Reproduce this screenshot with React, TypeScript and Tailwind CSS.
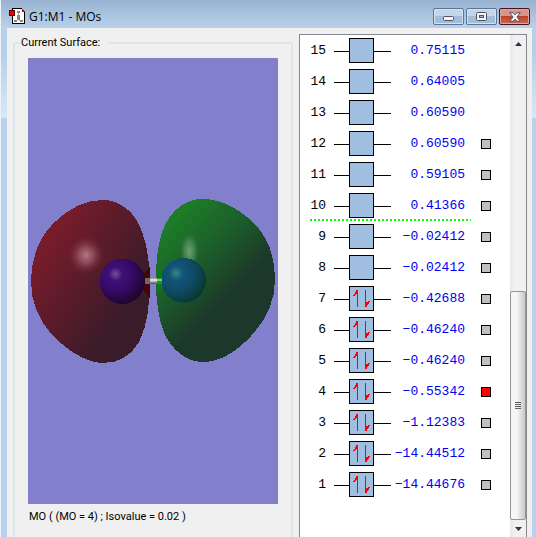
import { useState } from 'react';

type Orbital = {
    id: number;
    energy: string;
    occupied?: boolean;
    selectable?: boolean;
};

const orbitals: Orbital[] = [
    { id: 15, energy: '0.75115' },
    { id: 14, energy: '0.64005' },
    { id: 13, energy: '0.60590' },
    { id: 12, energy: '0.60590', selectable: true },
    { id: 11, energy: '0.59105', selectable: true },
    { id: 10, energy: '0.41366', selectable: true },
    { id: 9, energy: '−0.02412', selectable: true },
    { id: 8, energy: '−0.02412', selectable: true },
    { id: 7, energy: '−0.42688', selectable: true, occupied: true },
    { id: 6, energy: '−0.46240', selectable: true, occupied: true },
    { id: 5, energy: '−0.46240', selectable: true, occupied: true },
    { id: 4, energy: '−0.55342', selectable: true, occupied: true },
    { id: 3, energy: '−1.12383', selectable: true, occupied: true },
    { id: 2, energy: '−14.44512', selectable: true, occupied: true },
    { id: 1, energy: '−14.44676', selectable: true, occupied: true },
];

// the divider is drawn under this one
const GAP_ORBITAL = 10;

function AppIcon() {
    return (
        <svg viewBox="0 0 17 17" className="h-[17px] w-[17px]" shapeRendering="crispEdges" aria-hidden="true">
            <path d="M3.5 .5h9l3 3v12h-12z" fill="#fff" stroke="#000" />
            <path d="M13 1h1v1h1v1h1v1h-3z" fill="#e00000" />
            <path d="M9 3v8M9 11l-3 3M9 11l3 3" stroke="#aaa" strokeWidth="1" />
            <path d="M8 3h3v2H8zM8 7h3v5H8zM5 12h3v2H5zM11 12h3v2h-3z" fill="#888" />
            <rect x=".5" y="2.5" width="5" height="5" fill="#f00000" stroke="#500" strokeWidth="1" />
        </svg>
    );
}

function TitleBar() {
    const button =
        'flex h-[17px] w-[31px] items-center justify-center rounded-[2px] border border-[#5c7594] bg-linear-to-b from-[#c3d5e8] from-50% to-[#a3bcd7] to-50% shadow-[inset_0_0_0_1px_#d5e3f1]';

    return (
        <header className="flex h-7 shrink-0 items-start pr-[6px] pl-[8px]">
            <div className="flex flex-1 items-center gap-[3px] pt-[8px]">
                <AppIcon />
                <h1 className="text-[12px] leading-4 text-black font-['Open_Sans','Noto_Sans',sans-serif]">G1:M1 - MOs</h1>
            </div>
            <div className="flex gap-[2px] pt-2">
                <button type="button" aria-label="Minimize" className={button}>
                    <svg viewBox="0 0 11 5" className="mt-1 h-[5px] w-[11px]" aria-hidden="true">
                        <rect x=".5" y=".5" width="10" height="4" rx="1" fill="#f4f4f4" stroke="#4d5565" />
                    </svg>
                </button>
                <button type="button" aria-label="Maximize" className={button}>
                    <svg viewBox="0 0 11 9" className="h-[9px] w-[11px]" aria-hidden="true">
                        <rect x=".5" y=".5" width="10" height="8" rx="1" fill="#f4f4f4" stroke="#4d5565" />
                        <rect x="3.5" y="3.5" width="4" height="2" fill="#9fbbda" stroke="#4d5565" />
                    </svg>
                </button>
                <button
                    type="button"
                    aria-label="Close"
                    className="flex h-[17px] w-[31px] items-center justify-center rounded-[2px] border border-[#431422] bg-linear-to-b from-[#d9958a] from-45% via-[#bb3d28] via-45% to-[#cf6a50] shadow-[inset_0_0_0_1px_#e0a79f]"
                >
                    <svg viewBox="0 0 12 10" className="h-[10px] w-[12px]" aria-hidden="true">
                        <path
                            d="M.7.7h3.4L6 2.8 7.9.7h3.4L8 5l3.3 4.3H7.9L6 7.200 4.100 9.300H.7L4 5z"
                            fill="#f4f4f4"
                            stroke="#4d5060"
                        />
                    </svg>
                </button>
            </div>
        </header>
    );
}

function Surface() {
    return (
        <svg
            viewBox="0 0 250 446"
            className="min-h-0 w-full flex-1 bg-[#8280cc]"
            shapeRendering="crispEdges"
            role="img"
            aria-label="Molecular orbital surface"
        >
            <defs>
                <linearGradient id="red" gradientUnits="userSpaceOnUse" x1="70" y1="170" x2="345" y2="350">
                    <stop offset="0" stopColor="#7b1c2a" />
                    <stop offset=".5" stopColor="#5a1b2a" />
                    <stop offset="1" stopColor="#3a1b29" />
                </linearGradient>
                <linearGradient id="green" gradientUnits="userSpaceOnUse" x1="90" y1="130" x2="290" y2="330">
                    <stop offset="0" stopColor="#1c7c28" />
                    <stop offset=".5" stopColor="#1d5d2a" />
                    <stop offset="1" stopColor="#1c372b" />
                </linearGradient>
                <radialGradient id="shine">
                    <stop offset="0" stopColor="#b8848f" stopOpacity=".9" />
                    <stop offset=".4" stopColor="#a45c6b" stopOpacity=".7" />
                    <stop offset="1" stopColor="#7a2a38" stopOpacity="0" />
                </radialGradient>
                <radialGradient id="greenShine">
                    <stop offset="0" stopColor="#76a67c" stopOpacity=".9" />
                    <stop offset=".5" stopColor="#559060" stopOpacity=".7" />
                    <stop offset="1" stopColor="#2a7035" stopOpacity="0" />
                </radialGradient>
                <radialGradient id="purpleAtom" cx=".35" cy=".34" r=".75">
                    <stop offset="0" stopColor="#76509a" />
                    <stop offset=".2" stopColor="#3f1078" />
                    <stop offset=".5" stopColor="#350a66" />
                    <stop offset="1" stopColor="#1a0422" />
                </radialGradient>
                <radialGradient id="blueAtom" cx=".33" cy=".34" r=".8">
                    <stop offset="0" stopColor="#3a8580" />
                    <stop offset=".2" stopColor="#125578" />
                    <stop offset=".5" stopColor="#0f4a68" />
                    <stop offset="1" stopColor="#06351f" />
                </radialGradient>
                <linearGradient id="bond" x2="0" y2="1">
                    <stop offset="0" stopColor="#8e8a8a" />
                    <stop offset=".35" stopColor="#f4f2f2" />
                    <stop offset="1" stopColor="#5a5555" />
                </linearGradient>
            </defs>

            <g transform="translate(-8 122) scale(.3333)">
                <path
                    d="M248 60C300 60 345 95 366 155C382 200 389 245 389 305C389 370 384 430 358 485C332 530 295 549 250 549C195 549 135 505 95 463C55 420 33 365 33 303C33 240 55 175 100 130C145 85 195 60 248 60Z"
                    fill="url(#red)"
                />
                <ellipse cx="198" cy="226" rx="55" ry="58" fill="url(#shine)" />
                <path d="M366 290L389 260V356L366 325Z" fill="#420608" />
                <circle cx="307" cy="304" r="68" fill="url(#purpleAtom)" />
                <rect x="374" y="295" width="16" height="16" fill="#7c625e" />
            </g>

            <g transform="translate(112 122) scale(.3333)">
                <path
                    d="M188 57C250 57 310 95 350 138C388 182 405 235 405 300C405 360 382 415 338 463C295 510 245 546 188 546C140 546 95 510 73 460C55 415 48 365 48 300C48 230 55 180 75 135C100 85 140 57 188 57Z"
                    fill="url(#green)"
                />
                <path d="M50 280L68 275V325L50 340Z" fill="#08791a" />
                <ellipse cx="148" cy="214" rx="30" ry="60" fill="url(#greenShine)" />
                <circle cx="131" cy="301" r="67" fill="url(#blueAtom)" />
                <rect x="30" y="294" width="20" height="17" fill="url(#bond)" />
                <rect x="50" y="294" width="16" height="17" fill="#119c20" />
                <rect x="50" y="297" width="16" height="5" fill="#7dd080" />
            </g>
        </svg>
    );
}

function OrbitalBox({ occupied }: { occupied?: boolean }) {
    return (
        <svg viewBox="0 0 57 25" className="h-[25px] w-[57px]" shapeRendering="crispEdges" aria-hidden="true">
            <path d="M0 13.5h57" stroke="#000" />
            <rect x="15.5" y=".5" width="24" height="24" fill="#a0bfe0" stroke="#000" />
            {occupied && (
                <g fill="#f00" stroke="none">
                    <path d="M23 4h1v17h-1zM22 4h2v4h-2zM21 6h2v2h-2zM20 8h2v1h-2zM19 9h2v1h-2z" />
                    <path d="M31 4h1v17h-1zM31 16h2v5h-2zM33 16h1v3h-1zM34 15h1v3h-1zM35 15h1v1h-1z" />
                </g>
            )}
        </svg>
    );
}

function ScrollBar() {
    return (
        <div className="flex w-[16px] shrink-0 flex-col bg-linear-to-r from-[#e6e6e6] to-[#f1f1f1] to-30%">
            <button type="button" aria-label="Scroll up" className="flex h-[17px] items-center justify-center">
                <svg viewBox="0 0 7 4" className="h-1 w-[7px]" aria-hidden="true">
                    <path d="M0 4L3.5 0L7 4z" fill="#333" />
                </svg>
            </button>
            <div className="grid flex-1 grid-rows-[239fr_229fr]">
                <div />
                <div className="flex flex-col items-center justify-center gap-px rounded-[2px] border border-[#969696] bg-linear-to-r from-[#f6f6f6] from-40% to-[#c8c8c8]">
                    <span className="h-px w-[6px] bg-[#555]" />
                    <span className="h-px w-[6px] bg-[#666]" />
                    <span className="h-px w-[6px] bg-[#555]" />
                    <span className="h-px w-[6px] bg-[#666]" />
                </div>
            </div>
            <button type="button" aria-label="Scroll down" className="flex h-[17px] items-center justify-center">
                <svg viewBox="0 0 7 4" className="h-1 w-[7px]" aria-hidden="true">
                    <path d="M0 0L3.5 4L7 0z" fill="#333" />
                </svg>
            </button>
        </div>
    );
}

export default function App() {
    const [selected, setSelected] = useState(4);

    return (
        <main className="flex min-h-screen flex-col border-l border-[#eef4fa] bg-[linear-gradient(180deg,#98b4d2_0,#b9d1ea_28px,#b4cfea_50px,#d9e7f5_117px,#b9d1ea_119px)] font-[Roboto,'Liberation_Sans',sans-serif]">
            <TitleBar />

            <div className="mr-1 ml-[6px] flex flex-1 gap-[6px] bg-[#f0f0f0] pt-[6px] pr-[5px] pl-[6px]">
                <fieldset className="flex min-w-0 flex-1 flex-col rounded-t-[3px] border-2 border-b-0 border-[#dde4ea] px-[13px] pb-3">
                    <legend className="-ml-2 pr-2 pl-px text-[11px] leading-[18px] text-black">Current Surface:</legend>
                    <div className="flex flex-1 flex-col pt-[6px]">
                        <Surface />
                        <p className="pt-1 pl-px text-[11px] leading-[17px] text-black">MO ( (MO = 4) ; Isovalue = 0.02 )</p>
                    </div>
                </fieldset>

                <section className="flex w-[228px] shrink-0 border border-b-0 border-[#828790] bg-white">
                    <div className="flex-1">
                        <table className="border-collapse font-['Liberation_Mono','Courier_New',monospace] text-[13px] leading-4">
                            <tbody>
                                {orbitals.map((o) => (
                                    <tr key={o.id} className="relative h-[31px]">
                                        <td className="w-[34px] pr-2 text-right text-black">{o.id}</td>
                                        <td className="w-[57px]">
                                            <OrbitalBox occupied={o.occupied} />
                                            {o.id === GAP_ORBITAL && (
                                                <span className="absolute bottom-0 left-[10px] h-[2px] w-[161px] bg-[repeating-linear-gradient(90deg,#0f0_0_2px,transparent_2px_4px)]" />
                                            )}
                                        </td>
                                        <td className="w-[74px] text-right text-[#0000f0]">{o.energy}</td>
                                        <td className="pl-4">
                                            {o.selectable && (
                                                <input
                                                    type="checkbox"
                                                    aria-label={`Show orbital ${o.id}`}
                                                    checked={selected === o.id}
                                                    onChange={() => setSelected(o.id)}
                                                    className="block h-[10px] w-[10px] appearance-none border border-black bg-[#c0c0c0] checked:bg-[#f00]"
                                                />
                                            )}
                                        </td>
                                    </tr>
                                ))}
                            </tbody>
                        </table>
                    </div>
                    <ScrollBar />
                </section>
            </div>
        </main>
    );
}
